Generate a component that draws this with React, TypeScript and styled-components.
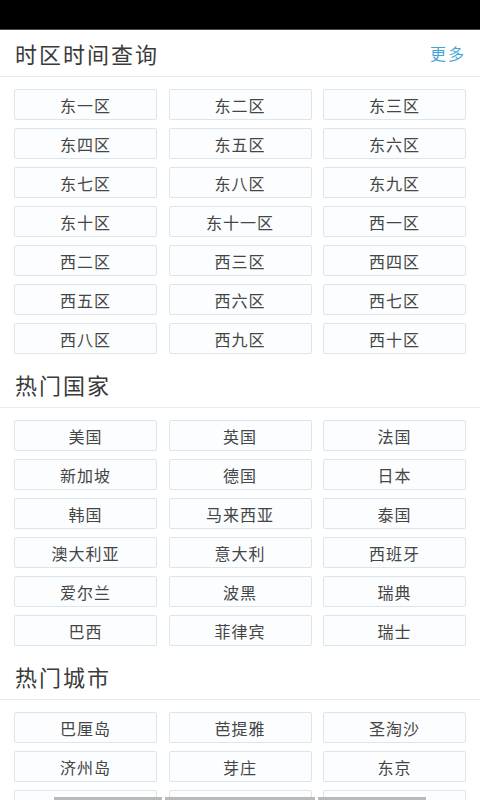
import React from "react";
import styled, { createGlobalStyle } from "styled-components";

const GlobalStyle = createGlobalStyle`
  body {
    margin: 0;
    background: #ffffff;
    font-family: "Noto Sans CJK SC", "Noto Sans", sans-serif;
  }
`;

const Page = styled.div`
  width: 480px;
  height: 800px;
  overflow: hidden;
  position: relative;
  background: #fff;
`;

const StatusBar = styled.div`
  height: 29px;
  background: #000;
  border-bottom: 1px solid #4a4a4a;
`;

const Header = styled.div`
  height: 46px;
  display: flex;
  align-items: center;
  justify-content: space-between;
  padding: 0 14px 0 15px;
  border-bottom: 1px solid #e6ecef;
`;

const Title = styled.h2`
  margin: 0;
  font-size: 22px;
  font-weight: 400;
  letter-spacing: 2px;
  color: #3a3a3a;
`;

const More = styled.span`
  font-size: 16px;
  letter-spacing: 2px;
  color: #45a6d6;
`;

const Grid = styled.div`
  display: grid;
  grid-template-columns: repeat(3, 1fr);
  column-gap: 11.5px;
  row-gap: 8px;
  padding: 12px 14px 7px 14px;
`;

const Cell = styled.div`
  height: 29px;
  display: flex;
  align-items: center;
  justify-content: center;
  border: 1px solid #d9e6ed;
  border-radius: 2px;
  background: #fbfdfe;
  font-size: 16px;
  letter-spacing: 1px;
  color: #454545;
`;

/* thin grey strip that lies over the bottom row in the screenshot */
const Overlay = styled.div`
  position: absolute;
  left: 0;
  right: 0;
  bottom: 0;
  height: 3px;
  display: flex;
  gap: 3px;
  padding-left: 54px;
`;

const OverlaySeg = styled.div<{ $wide?: boolean }>`
  width: ${({ $wide }) => ($wide ? 150 : 108)}px;
  background: #b9b9b9;
`;

const sections = [
  {
    title: "时区时间查询",
    more: true,
    items: [
      "东一区", "东二区", "东三区",
      "东四区", "东五区", "东六区",
      "东七区", "东八区", "东九区",
      "东十区", "东十一区", "西一区",
      "西二区", "西三区", "西四区",
      "西五区", "西六区", "西七区",
      "西八区", "西九区", "西十区",
    ],
  },
  {
    title: "热门国家",
    more: false,
    items: [
      "美国", "英国", "法国",
      "新加坡", "德国", "日本",
      "韩国", "马来西亚", "泰国",
      "澳大利亚", "意大利", "西班牙",
      "爱尔兰", "波黑", "瑞典",
      "巴西", "菲律宾", "瑞士",
    ],
  },
  {
    title: "热门城市",
    more: false,
    items: [
      "巴厘岛", "芭提雅", "圣淘沙",
      "济州岛", "芽庄", "东京",
      "巴黎", "伦敦", "纽约",
    ],
  },
];

export default function App() {
  return (
    <Page>
      <GlobalStyle />
      <StatusBar />
      {sections.map((s) => (
        <section key={s.title}>
          <Header>
            <Title>{s.title}</Title>
            {s.more && <More>更多</More>}
          </Header>
          <Grid>
            {s.items.map((item) => (
              <Cell key={item}>{item}</Cell>
            ))}
          </Grid>
        </section>
      ))}
      <Overlay>
        <OverlaySeg />
        <OverlaySeg $wide />
        <OverlaySeg />
      </Overlay>
    </Page>
  );
}
